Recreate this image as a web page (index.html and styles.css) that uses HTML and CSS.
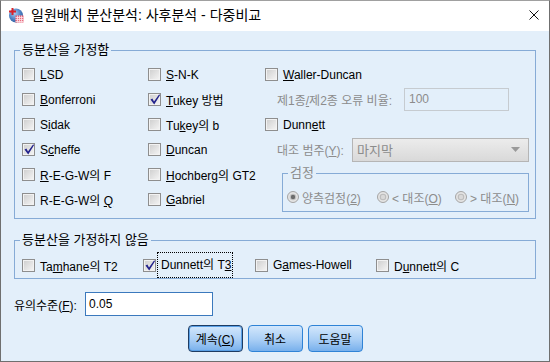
FILE: index.html
```html
<!DOCTYPE html>
<html lang="ko">
<head>
  <meta charset="UTF-8" />
  <title>일원배치 분산분석: 사후분석 - 다중비교</title>
  <link rel="stylesheet" href="styles.css">
</head>
<body>
  <div class="window">
    <div class="titlebar">
      <svg class="app-icon" width="16" height="16" viewBox="0 0 16 16">
        <defs>
          <radialGradient id="globe" cx="0.4" cy="0.35" r="0.7">
            <stop offset="0" stop-color="#a9cbef"/>
            <stop offset="0.6" stop-color="#4f82c4"/>
            <stop offset="1" stop-color="#2c5a9c"/>
          </radialGradient>
        </defs>
        <circle cx="8" cy="8.5" r="7" fill="url(#globe)"/>
        <rect x="1" y="3.5" width="7" height="2" fill="#d8232a"/>
        <rect x="3.5" y="1" width="2" height="7" fill="#d8232a"/>
        <rect x="7.5" y="8.5" width="8" height="7" fill="#e86a7e"/>
        <path d="M7.5 10.5h8M7.5 12.5h8M7.5 14.5h8M9.5 8.5v7M11.5 8.5v7M13.5 8.5v7" stroke="#fbe3e7" stroke-width="0.8"/>
      </svg>
      <span class="title">일원배치 분산분석: 사후분석 - 다중비교</span>
      <svg class="close" width="10" height="10" viewBox="0 0 10 10">
        <path d="M0.5 0.5L9.5 9.5M9.5 0.5L0.5 9.5" stroke="#111" stroke-width="1"/>
      </svg>
    </div>

    <div class="content">
      <!-- equal variances assumed -->
      <div class="group group-equal">
        <span class="group-title">등분산을 가정함</span>
        <div class="col">
          <label class="check"><span class="box"></span><span><u>L</u>SD</span></label>
          <label class="check"><span class="box"></span><span><u>B</u>onferroni</span></label>
          <label class="check"><span class="box"></span><span>S<u>i</u>dak</span></label>
          <label class="check"><span class="box"><svg viewBox="0 0 11 11"><path d="M1.5 5.6L3.4 4.6L5 7.4L10.2 0.2L11 1.2L5.2 10.4Z" fill="#22228c"/></svg></span><span>S<u>c</u>heffe</span></label>
          <label class="check"><span class="box"></span><span><u>R</u>-E-G-W의 F</span></label>
          <label class="check"><span class="box"></span><span>R-E-G-W의 <u>Q</u></span></label>
        </div>
        <div class="col">
          <label class="check"><span class="box"></span><span><u>S</u>-N-K</span></label>
          <label class="check"><span class="box"><svg viewBox="0 0 11 11"><path d="M1.5 5.6L3.4 4.6L5 7.4L10.2 0.2L11 1.2L5.2 10.4Z" fill="#22228c"/></svg></span><span><u>T</u>ukey 방법</span></label>
          <label class="check"><span class="box"></span><span>Tu<u>k</u>ey의 b</span></label>
          <label class="check"><span class="box"></span><span><u>D</u>uncan</span></label>
          <label class="check"><span class="box"></span><span><u>H</u>ochberg의 GT2</span></label>
          <label class="check"><span class="box"></span><span><u>G</u>abriel</span></label>
        </div>
        <div class="col">
          <label class="check"><span class="box"></span><span><u>W</u>aller-Duncan</span></label>
          <div class="field disabled">
            <span>제1종<u>/</u>제2종 오류 비율:</span>
            <span class="textbox">100</span>
          </div>
          <label class="check"><span class="box"></span><span>Dunn<u>e</u>tt</span></label>
          <div class="field disabled">
            <span>대조 범주(<u>Y</u>):</span>
            <span class="select"><span>마지막</span>
              <svg class="arrow" width="9" height="5" viewBox="0 0 9 5"><path d="M0 0H9L4.5 5Z" fill="#9a9a9a"/></svg>
            </span>
          </div>
          <div class="group group-test">
            <span class="group-title">검정</span>
            <span class="radio r1">
              <svg width="12" height="12" viewBox="0 0 12 12"><circle cx="6" cy="6" r="5.5" fill="#e4e4e4" stroke="#a4a4a4"/><circle cx="6" cy="6" r="3.3" fill="#c4c4c4"/><circle cx="6" cy="6" r="2.2" fill="#6c6c6c"/></svg>
              <span>양측검정(<u>2</u>)</span>
            </span>
            <span class="radio r2">
              <svg width="12" height="12" viewBox="0 0 12 12"><circle cx="6" cy="6" r="5.5" fill="#e4e4e4" stroke="#a4a4a4"/><circle cx="6" cy="6" r="3.3" fill="#bdbdbd"/><circle cx="6" cy="6" r="2.2" fill="#d9d9d9"/></svg>
              <span>&lt; 대조(<u>O</u>)</span>
            </span>
            <span class="radio">
              <svg width="12" height="12" viewBox="0 0 12 12"><circle cx="6" cy="6" r="5.5" fill="#e4e4e4" stroke="#a4a4a4"/><circle cx="6" cy="6" r="3.3" fill="#bdbdbd"/><circle cx="6" cy="6" r="2.2" fill="#d9d9d9"/></svg>
              <span>&gt; 대조(<u>N</u>)</span>
            </span>
          </div>
        </div>
      </div>

      <!-- equal variances not assumed -->
      <div class="group group-unequal">
        <span class="group-title">등분산을 가정하지 않음</span>
        <label class="check"><span class="box"></span><span>Ta<u>m</u>hane의 T2</span></label>
        <label class="check focused"><span class="box"><svg viewBox="0 0 11 11"><path d="M1.5 5.6L3.4 4.6L5 7.4L10.2 0.2L11 1.2L5.2 10.4Z" fill="#22228c"/></svg></span><span class="focus">Dunnett의 T<u>3</u></span></label>
        <label class="check"><span class="box"></span><span>G<u>a</u>mes-Howell</span></label>
        <label class="check"><span class="box"></span><span>D<u>u</u>nnett의 C</span></label>
      </div>

      <div class="sig-row">
        <span class="sig-label">유의수준(<u>F</u>):</span>
        <span class="sig-input">0.05</span>
      </div>

      <div class="buttons">
        <button class="btn default">계속(<u>C</u>)</button>
        <button class="btn">취소</button>
        <button class="btn">도움말</button>
      </div>
    </div>
  </div>
</body>
</html>
```

FILE: styles.css
```css
* {
  box-sizing: border-box;
}

body {
  margin: 0;
  font-family: "Liberation Sans", "Noto Sans CJK KR", sans-serif;
  font-size: 12px;
  color: #000;
  background: #fff;
}

u {
  text-decoration: underline;
  text-underline-offset: 1px;
}

.window {
  width: 550px;
  height: 362px;
  border: 1px solid #6f6f6f;
  border-top-color: #a0a0a0;
  background: #e3effa;
  display: flex;
  flex-direction: column;
}

.titlebar {
  height: 30px;
  flex-shrink: 0;
  background: #fff;
  display: flex;
  align-items: center;
  padding: 0 0 2px 7px;
}

.app-icon {
  display: block;
  margin-right: 7px;
}

.title {
  font-size: 14px;
  line-height: 18px;
}

.close {
  display: block;
  margin-left: auto;
  margin-right: 10px;
}

.content {
  flex: 1;
  padding: 19px 13px 0 13px;
}

/* group boxes */
.group {
  position: relative;
  border: 1px solid #86abd6;
}

.group-title {
  position: absolute;
  top: -9px;
  left: 5px;
  padding: 0 2px;
  font-size: 13px;
  line-height: 16px;
  background: #e3effa;
  white-space: nowrap;
}

.group-equal {
  display: grid;
  grid-template-columns: 126px 117px 1fr;
  padding: 11px 0 6px 7px;
}

.col {
  display: flex;
  flex-direction: column;
}

.check {
  display: flex;
  align-items: center;
  height: 25px;
  white-space: nowrap;
}

.box {
  width: 13px;
  height: 13px;
  flex-shrink: 0;
  margin-right: 5px;
  border: 1px solid #8e8e8e;
  background: linear-gradient(135deg, #cdcdcd, #f6f6f6);
  box-shadow: inset 0 0 0 1px #f2f2f2;
}

.box svg {
  display: block;
  width: 11px;
  height: 11px;
}

.field {
  display: flex;
  align-items: center;
  height: 25px;
  padding-left: 12px;
  white-space: nowrap;
}

.disabled {
  color: #8c8c8c;
}

.textbox {
  margin-left: auto;
  margin-right: 26px;
  width: 105px;
  height: 23px;
  line-height: 21px;
  padding-left: 4px;
  border: 1px solid #c6cbd0;
  color: #8c8c8c;
}

.select {
  margin-left: auto;
  margin-right: 6px;
  width: 177px;
  height: 24px;
  padding-left: 4px;
  border: 1px solid #b5b5b5;
  background: linear-gradient(#ececec, #d9d9d9);
  display: flex;
  align-items: center;
  font-size: 13px;
}

.arrow {
  display: block;
  margin-left: auto;
  margin-right: 8px;
}

.group-test {
  margin: 11px 6px 0 17px;
  height: 39px;
  padding: 12px 0 3px 4px;
  display: flex;
  align-items: center;
  color: #8c8c8c;
}

.group-test .group-title {
  color: #8c8c8c;
}

.radio {
  display: flex;
  align-items: center;
  gap: 3px;
  white-space: nowrap;
}

.radio svg {
  display: block;
}

.r1 {
  width: 90px;
}

.r2 {
  width: 78px;
}

.group-unequal {
  margin-top: 21px;
  display: grid;
  grid-template-columns: 121px 112px 121px 1fr;
  padding: 11px 0 0 7px;
}

.group-unequal .check {
  height: 26px;
}

.focused .box {
  margin-right: 1px;
}

.focus {
  height: 26px;
  line-height: 24px;
  padding: 0 1px 0 3px;
  border: 1px dotted #000;
}

.sig-row {
  margin-top: 13px;
  display: flex;
  align-items: center;
  height: 24px;
}

.sig-label {
  width: 71px;
}

.sig-input {
  width: 128px;
  height: 24px;
  line-height: 22px;
  padding-left: 3px;
  border: 1px solid #3b79bd;
  background: #fff;
}

.buttons {
  margin-top: 9px;
  display: flex;
  justify-content: center;
  gap: 5px;
}

.btn {
  width: 55px;
  height: 27px;
  padding: 0;
  font-family: inherit;
  font-size: 12px;
  color: #000;
  border: 1px solid #2f83d6;
  border-radius: 4px;
  background: linear-gradient(#d3e7fc, #a9cef5 55%, #78b0ec);
}

.btn.default {
  border-color: #1e3c63;
  box-shadow: inset 0 0 0 1px #5aa0e6;
}
```
